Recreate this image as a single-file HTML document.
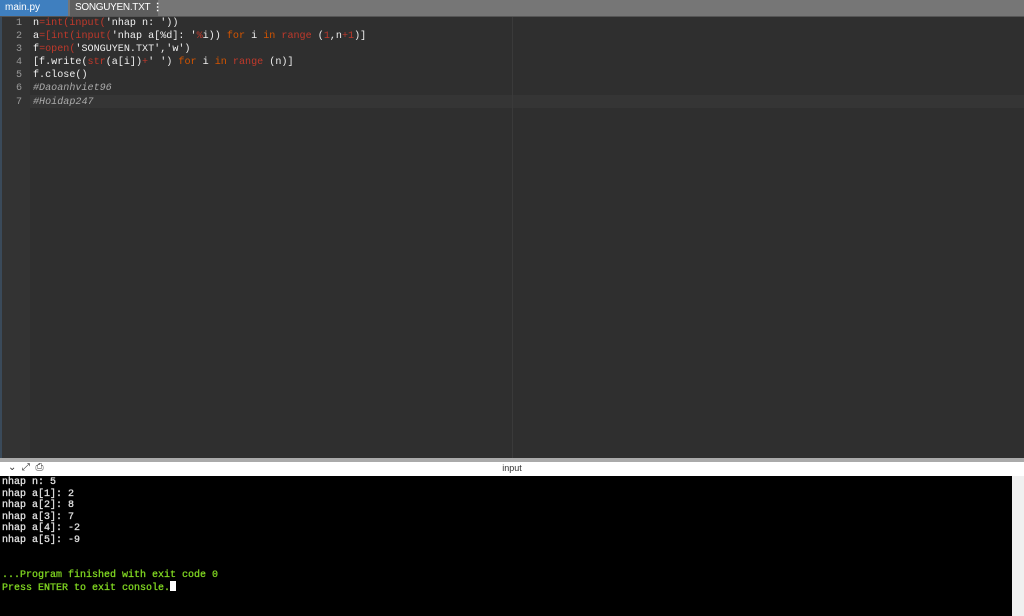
<!DOCTYPE html>
<html><head><style>
body{margin:0;width:1024px;height:616px;overflow:hidden;background:#2f2f2f;position:relative;font-family:"Liberation Sans",sans-serif}
.tabs{position:absolute;left:0;top:0;width:1024px;height:16px;background:#767676;border-bottom:1px solid #555}
.t1{position:absolute;left:0;top:0;width:68px;height:16px;background:#3f7fbf;color:#fff;font-size:10px;line-height:16px;padding-left:5px;box-sizing:border-box}
.t2{position:absolute;left:70px;top:0;width:88px;height:16px;background:#5e5e5e;color:#fff;font-size:10px;line-height:16px;padding-left:5px;box-sizing:border-box;white-space:nowrap;letter-spacing:-0.3px}
.gut{position:absolute;left:0;top:17px;width:30px;height:441px;background:#333}
.edge{position:absolute;left:0;top:17px;width:2px;height:441px;background:#3a4a5a}
.margin{position:absolute;left:512px;top:17px;width:1px;height:441px;background:#3a3a3a}
.cur{position:absolute;left:30px;top:95px;width:994px;height:13px;background:#353535}
.code{position:absolute;left:0;top:17px;font-family:"Liberation Mono",monospace;font-size:10.1px;line-height:13.1px;color:#f0f0f0;white-space:pre}
.ln{display:inline-block;width:22px;text-align:right;color:#999;margin-right:11px}
.r{color:#c0392b}.o{color:#d35400}.g{color:#aaa;font-style:italic}
.sep{position:absolute;left:0;top:458px;width:1024px;height:4px;background:#aaa}
.hdr{position:absolute;left:0;top:462px;width:1024px;height:14px;background:#fff;border-bottom:1px solid #999;font-size:9px;text-align:center;line-height:12px;color:#333}
.con{position:absolute;left:0;top:476px;width:1012px;height:140px;background:#000;font-family:"Liberation Mono",monospace;font-size:10px;line-height:11.6px;color:#e0e0e0;white-space:pre;padding-left:2px;padding-top:1px;box-sizing:border-box;-webkit-text-stroke:0.3px}
.rs{position:absolute;left:1012px;top:476px;width:12px;height:140px;background:#f0f0f0}
.gr{color:#7ed321}
.cu{display:inline-block;width:6px;height:10px;background:#fff;vertical-align:-1px}
</style></head><body>
<div class="tabs"><div class="t1">main.py</div><div class="t2">SONGUYEN.TXT <b>⋮</b></div></div>
<div class="gut"></div><div class="edge"></div><div class="cur"></div><div class="margin"></div>
<div class="code"><span class="ln">1</span>n<span class="r">=int(input(</span>'nhap n: '))
<span class="ln">2</span>a<span class="r">=[int(input(</span>'nhap a[%d]: '<span class="r">%</span>i)) <span class="o">for</span> i <span class="o">in</span> <span class="r">range</span> (<span class="r">1</span>,n<span class="r">+1</span>)]
<span class="ln">3</span>f<span class="r">=open(</span>'SONGUYEN.TXT','w')
<span class="ln">4</span>[f.write(<span class="r">str</span>(a[i])<span class="r">+</span>' ') <span class="o">for</span> i <span class="o">in</span> <span class="r">range</span> (n)]
<span class="ln">5</span>f.close()
<span class="ln">6</span><span class="g">#Daoanhviet96</span>
<span class="ln">7</span><span class="g">#Hoidap247</span></div>
<div class="sep"></div>
<div class="hdr"><span style="position:absolute;left:8px;top:0;font-size:10px">⌄ &nbsp;⤢ &nbsp;⎙</span>input</div>
<div class="con">nhap n: 5
nhap a[1]: 2
nhap a[2]: 8
nhap a[3]: 7
nhap a[4]: -2
nhap a[5]: -9


<span class="gr">...Program finished with exit code 0
Press ENTER to exit console.</span><span class="cu"></span></div>
<div class="rs"></div>
</body></html>
